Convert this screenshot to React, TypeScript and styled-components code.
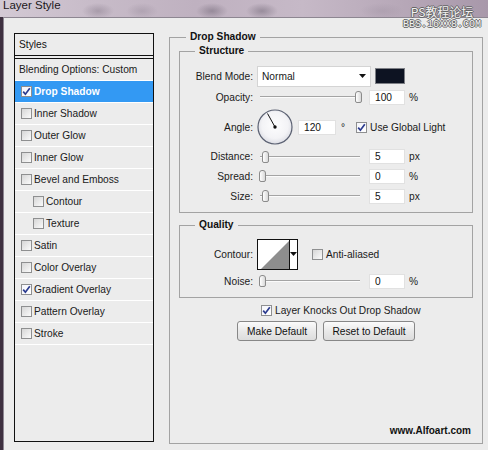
import React from "react";
import styled, { createGlobalStyle } from "styled-components";

const Global = createGlobalStyle`
  html, body { margin: 0; padding: 0; background: #3e3040; }
  body { width: 488px; height: 450px; overflow: hidden; font-family: "Liberation Sans", Arial, sans-serif; }
  #root { width: 488px; height: 450px; }
`;

const Screen = styled.div`
  position: relative;
  width: 488px;
  height: 450px;
  display: flex;
  flex-direction: column;
  overflow: hidden;
`;

const TitleBar = styled.div`
  height: 17px;
  flex: none;
  display: flex;
  align-items: flex-start;
  padding-left: 3px;
  overflow: hidden;
  background:
    radial-gradient(ellipse 16px 8px at 98px 11px, rgba(130, 118, 134, 0.45), rgba(130, 118, 134, 0)),
    radial-gradient(ellipse 16px 8px at 142px 11px, rgba(140, 128, 144, 0.35), rgba(140, 128, 144, 0)),
    radial-gradient(ellipse 16px 8px at 212px 11px, rgba(100, 90, 106, 0.45), rgba(100, 90, 106, 0)),
    radial-gradient(ellipse 16px 8px at 262px 11px, rgba(100, 90, 106, 0.45), rgba(100, 90, 106, 0)),
    radial-gradient(ellipse 22px 8px at 382px 11px, rgba(150, 138, 154, 0.3), rgba(150, 138, 154, 0)),
    linear-gradient(90deg, #d3c9d4 0%, #c8bcc9 18%, #bfb1c0 40%, #c6b9c7 62%, #b7a8b8 82%, #a898aa 100%);
`;

const TitleText = styled.span`
  font-family: "Liberation Sans", Arial, sans-serif;
  font-size: 11.5px;
  line-height: 12px;
  margin-top: -1px;
  color: #1c1820;
`;

const Watermark = styled.div`
  position: absolute;
  top: 5px;
  right: 7px;
  display: flex;
  flex-direction: column;
  align-items: center;
  color: #f2f2f2;
  text-shadow: 1px 0 #666, -1px 0 #666, 0 1px #666, 0 -1px #666;
`;

const WatermarkTop = styled.span`
  font-family: "Noto Sans CJK SC", "Noto Sans", sans-serif;
  font-size: 12px;
  line-height: 14px;
`;

const WatermarkBottom = styled.span`
  font-family: "Liberation Mono", monospace;
  font-size: 10px;
  line-height: 11px;
`;

const Window = styled.div`
  flex: 1;
  display: flex;
  align-items: flex-start;
  gap: 15px;
  margin-left: 3px;
  padding: 0 5px 0 10px;
  background: #ececec;
  border-top: 1px solid #8d8691;
  border-left: 1px solid #8d8691;
`;

const StylesPanel = styled.div`
  flex: none;
  width: 140px;
  height: 409px;
  margin-top: 15px;
  box-sizing: border-box;
  border: 1px solid #111;
  display: flex;
  flex-direction: column;
`;

const StylesHeader = styled.div`
  height: 21px;
  border-bottom: 1px solid #111;
  padding-left: 4px;
  display: flex;
  align-items: center;
  font-size: 10.2px;
  color: #111;
`;

const StylesList = styled.div`
  margin-top: 2px;
  border-top: 1px solid #111;
  display: flex;
  flex-direction: column;
`;

const StyleRow = styled.div<{ $selected?: boolean; $pad: number }>`
  height: 21px;
  border-bottom: 1px solid #fff;
  display: flex;
  align-items: center;
  gap: 2px;
  padding-left: ${(p) => p.$pad}px;
  font-size: 10.2px;
  white-space: nowrap;
  background: ${(p) => (p.$selected ? "#3399f3" : "transparent")};
  color: ${(p) => (p.$selected ? "#fff" : "#1a1a1a")};
  font-weight: ${(p) => (p.$selected ? "bold" : "normal")};
`;

const CheckBoxBox = styled.span<{ $checked?: boolean }>`
  flex: none;
  width: 11px;
  height: 11px;
  box-sizing: border-box;
  border: 1px solid #8e8f90;
  display: inline-flex;
  align-items: center;
  justify-content: center;
  background: ${(p) =>
    p.$checked
      ? "linear-gradient(135deg, #f4f5fb, #ffffff)"
      : "linear-gradient(135deg, #d6d6d6, #fbfbfb)"};
`;

const CheckBox: React.FC<{ checked?: boolean }> = ({ checked }) => (
  <CheckBoxBox $checked={checked}>
    {checked && (
      <svg width="9" height="9" viewBox="0 0 9 9">
        <path d="M1.2 4.6 L3.4 7.2 L7.8 1.2" fill="none" stroke="#2b3b8f" strokeWidth="1.7" />
      </svg>
    )}
  </CheckBoxBox>
);

const Group = styled.fieldset<{ $outer?: boolean; $gapTop?: number }>`
  margin: ${(p) => (p.$outer ? "13px 0 0 0" : `${p.$gapTop ?? 0}px 0 0 0`)};
  min-width: 0;
  box-sizing: border-box;
  border: 1px solid #a3a3a3;
  display: flex;
  flex-direction: column;
  ${(p) =>
    p.$outer
      ? "width: 314px; height: 413px; padding: 2px 9px 0 9px; flex: none;"
      : "padding: 6px 10px 6px 10px;"}
`;

const GroupTitle = styled.legend<{ $inset: number }>`
  padding: 0 4px;
  margin-left: ${(p) => p.$inset}px;
  font-size: 10.2px;
  line-height: 12px;
  font-weight: bold;
  color: #111;
`;

const FieldRow = styled.div<{ $h: number }>`
  height: ${(p) => p.$h}px;
  display: flex;
  align-items: center;
  font-size: 10.2px;
  color: #1a1a1a;
`;

const Label = styled.span`
  flex: none;
  width: 63px;
  margin-right: 4px;
  text-align: right;
  white-space: nowrap;
`;

const Select = styled.div`
  flex: none;
  width: 114px;
  height: 21px;
  box-sizing: border-box;
  background: #fff;
  border: 1px solid #d4d4d4;
  display: flex;
  align-items: center;
  justify-content: space-between;
  padding: 0 4px 0 4px;
`;

const Swatch = styled.div`
  flex: none;
  width: 30px;
  height: 16px;
  margin-left: 4px;
  box-sizing: border-box;
  border: 1px solid #7d7f85;
  background: #0d1322;
`;

const SliderTrack = styled.div`
  position: relative;
  flex: none;
  width: 104px;
  height: 12px;
  margin-left: 2px;
  &::before {
    content: "";
    position: absolute;
    left: 1px;
    right: 3px;
    top: 5px;
    height: 1px;
    background: #a4a4a4;
    box-shadow: 0 1px 0 #fbfbfb;
  }
`;

const Thumb = styled.div`
  position: absolute;
  top: 0;
  width: 7px;
  height: 12px;
  box-sizing: border-box;
  border: 1px solid #8b8b8b;
  border-radius: 3px 3px 2px 2px;
  background: linear-gradient(90deg, #ffffff, #d9d9d9);
`;

const Slider: React.FC<{ pos: number }> = ({ pos }) => (
  <SliderTrack>
    <Thumb style={{ left: `${pos}px` }} />
  </SliderTrack>
);

const NumberBox = styled.input<{ $w?: number; $ml?: number }>`
  flex: none;
  width: ${(p) => p.$w ?? 36}px;
  height: 15px;
  margin: 0 0 0 ${(p) => p.$ml ?? 6}px;
  padding: 0 0 0 5px;
  box-sizing: border-box;
  border: 1px solid #e1e1e1;
  background: #fff;
  font-family: "Liberation Sans", Arial, sans-serif;
  font-size: 10.2px;
  color: #111;
  outline: none;
`;

const Unit = styled.span<{ $ml?: number }>`
  margin-left: ${(p) => p.$ml ?? 4}px;
`;

const CheckLabel = styled.label<{ $ml: number }>`
  display: flex;
  align-items: center;
  gap: 3px;
  margin-left: ${(p) => p.$ml}px;
  white-space: nowrap;
`;

const ContourBox = styled.div`
  flex: none;
  width: 41px;
  height: 31px;
  box-sizing: border-box;
  border: 1px solid #111;
  background: #fff;
  display: flex;
`;

const ContourArrow = styled.div`
  flex: 1;
  border-left: 1px solid #111;
  display: flex;
  align-items: center;
  justify-content: center;
`;

const KnockRow = styled.div`
  height: 20px;
  margin: 2px 0 0 82px;
  display: flex;
  align-items: center;
  font-size: 10.2px;
  color: #1a1a1a;
`;

const ButtonRow = styled.div`
  display: flex;
  justify-content: center;
  gap: 6px;
  margin-top: 1px;
`;

const Button = styled.button<{ $w: number }>`
  width: ${(p) => p.$w}px;
  height: 20px;
  padding: 0;
  box-sizing: border-box;
  border: 1px solid #878787;
  border-radius: 3px;
  background: linear-gradient(#fbfbfb, #e9e9e9 50%, #dcdcdc);
  font-family: "Liberation Sans", Arial, sans-serif;
  font-size: 10.2px;
  color: #111;
`;

const Credit = styled.div`
  margin: auto 2px 6px 0;
  align-self: flex-end;
  font-size: 10px;
  line-height: 12px;
  font-weight: bold;
  color: #111;
`;

const DownArrow = () => (
  <svg width="7" height="4" viewBox="0 0 7 4">
    <polygon points="0,0 7,0 3.5,4" fill="#111" />
  </svg>
);

const AngleDial = () => (
  <svg width="36" height="36" viewBox="0 0 36 36" style={{ flex: "none", marginRight: 5 }}>
    <defs>
      <radialGradient id="dialFill" cx="50%" cy="45%" r="55%">
        <stop offset="0%" stopColor="#fdfdfe" />
        <stop offset="70%" stopColor="#f3f3f6" />
        <stop offset="100%" stopColor="#dcdde4" />
      </radialGradient>
    </defs>
    <circle cx="18" cy="18" r="17" fill="url(#dialFill)" stroke="#5b6172" strokeWidth="1.2" />
    <line x1="18" y1="18" x2="10.5" y2="4.5" stroke="#111" strokeWidth="1" />
    <circle cx="18" cy="18" r="1.7" fill="#111" />
  </svg>
);

const ContourPreview = () => (
  <svg width="31" height="29" viewBox="0 0 31 29" style={{ display: "block" }}>
    <polygon points="3,29 31,1 31,29" fill="#8e8e8e" />
  </svg>
);

const styleItems: { label: string; checked?: boolean; selected?: boolean; indent?: boolean }[] = [
  { label: "Drop Shadow", checked: true, selected: true },
  { label: "Inner Shadow" },
  { label: "Outer Glow" },
  { label: "Inner Glow" },
  { label: "Bevel and Emboss" },
  { label: "Contour", indent: true },
  { label: "Texture", indent: true },
  { label: "Satin" },
  { label: "Color Overlay" },
  { label: "Gradient Overlay", checked: true },
  { label: "Pattern Overlay" },
  { label: "Stroke" },
];

export default function App() {
  return (
    <Screen>
      <Global />
      <TitleBar>
        <TitleText>Layer Style</TitleText>
      </TitleBar>
      <Window>
        <StylesPanel>
          <StylesHeader>Styles</StylesHeader>
          <StylesList>
            <StyleRow $pad={4}>Blending Options: Custom</StyleRow>
            {styleItems.map((it) => (
              <StyleRow key={it.label} $pad={it.indent ? 18 : 6} $selected={it.selected}>
                <CheckBox checked={it.checked} />
                {it.label}
              </StyleRow>
            ))}
          </StylesList>
        </StylesPanel>

        <Group $outer>
          <GroupTitle $inset={7}>Drop Shadow</GroupTitle>
          <Group>
            <GroupTitle $inset={5}>Structure</GroupTitle>
            <FieldRow $h={22} style={{ marginTop: 2 }}>
              <Label>Blend Mode:</Label>
              <Select>
                <span>Normal</span>
                <DownArrow />
              </Select>
              <Swatch />
            </FieldRow>
            <FieldRow $h={20}>
              <Label>Opacity:</Label>
              <Slider pos={96} />
              <NumberBox readOnly value="100" />
              <Unit>%</Unit>
            </FieldRow>
            <FieldRow $h={40}>
              <Label>Angle:</Label>
              <AngleDial />
              <NumberBox readOnly value="120" $w={38} $ml={0} />
              <Unit $ml={5}>°</Unit>
              <CheckLabel $ml={11}>
                <CheckBox checked />
                Use Global Light
              </CheckLabel>
            </FieldRow>
            <FieldRow $h={19}>
              <Label>Distance:</Label>
              <Slider pos={3} />
              <NumberBox readOnly value="5" />
              <Unit>px</Unit>
            </FieldRow>
            <FieldRow $h={20}>
              <Label>Spread:</Label>
              <Slider pos={0} />
              <NumberBox readOnly value="0" />
              <Unit>%</Unit>
            </FieldRow>
            <FieldRow $h={20}>
              <Label>Size:</Label>
              <Slider pos={3} />
              <NumberBox readOnly value="5" />
              <Unit>px</Unit>
            </FieldRow>
          </Group>

          <Group $gapTop={6}>
            <GroupTitle $inset={5}>Quality</GroupTitle>
            <FieldRow $h={34}>
              <Label>Contour:</Label>
              <ContourBox>
                <ContourPreview />
                <ContourArrow>
                  <DownArrow />
                </ContourArrow>
              </ContourBox>
              <CheckLabel $ml={14}>
                <CheckBox />
                Anti-aliased
              </CheckLabel>
            </FieldRow>
            <FieldRow $h={20}>
              <Label>Noise:</Label>
              <Slider pos={0} />
              <NumberBox readOnly value="0" />
              <Unit>%</Unit>
            </FieldRow>
          </Group>

          <KnockRow>
            <CheckLabel $ml={0}>
              <CheckBox checked />
              Layer Knocks Out Drop Shadow
            </CheckLabel>
          </KnockRow>
          <ButtonRow>
            <Button $w={80}>Make Default</Button>
            <Button $w={92}>Reset to Default</Button>
          </ButtonRow>
          <Credit>www.Alfoart.com</Credit>
        </Group>
      </Window>
      <Watermark>
        <WatermarkTop>PS教程论坛</WatermarkTop>
        <WatermarkBottom>BBS.16XX8.COM</WatermarkBottom>
      </Watermark>
    </Screen>
  );
}
